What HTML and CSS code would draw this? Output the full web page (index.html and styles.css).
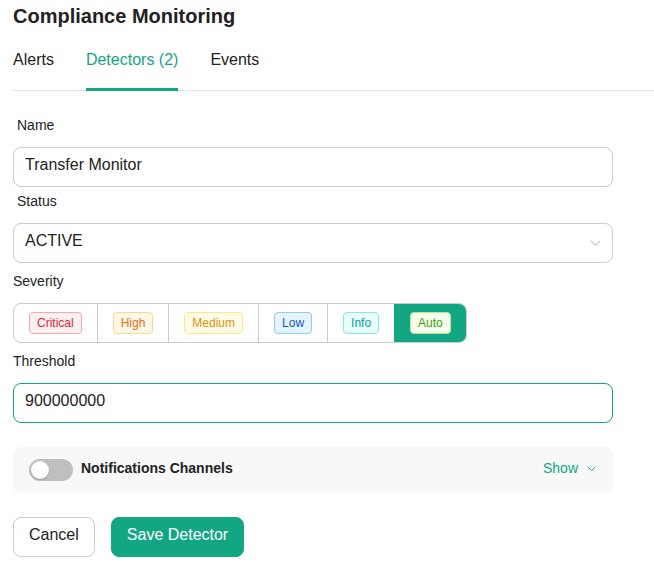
FILE: index.html
```html
<!DOCTYPE html>
<html>
<head>
<meta charset="utf-8">
<link rel="stylesheet" href="styles.css">
</head>
<body>
<div class="page">
  <h1 class="title">Compliance Monitoring</h1>
  <nav class="tabs">
    <span class="tab">Alerts</span>
    <span class="tab active">Detectors (2)</span>
    <span class="tab">Events</span>
  </nav>

  <form class="form">
    <label class="label indent">Name</label>
    <div class="field">Transfer Monitor</div>

    <label class="label indent">Status</label>
    <div class="field select">
      <span>ACTIVE</span>
      <svg class="chev" width="11" height="7" viewBox="0 0 11 7"><path d="M1 1 L5.5 5.5 L10 1" fill="none" stroke="#c4c6cc" stroke-width="1.1"/></svg>
    </div>

    <label class="label">Severity</label>
    <div class="segmented">
      <div class="seg"><span class="badge critical">Critical</span></div>
      <div class="seg"><span class="badge high">High</span></div>
      <div class="seg"><span class="badge medium">Medium</span></div>
      <div class="seg"><span class="badge low">Low</span></div>
      <div class="seg"><span class="badge info">Info</span></div>
      <div class="seg selected"><span class="badge auto">Auto</span></div>
    </div>

    <label class="label">Threshold</label>
    <div class="field focus">900000000</div>

    <div class="panel">
      <span class="toggle"><span class="knob"></span></span>
      <span class="panel-title">Notifications Channels</span>
      <span class="show">Show
        <svg width="9" height="6" viewBox="0 0 9 6"><path d="M0.8 1 L4.5 4.6 L8.2 1" fill="none" stroke="#13a683" stroke-width="1"/></svg>
      </span>
    </div>

    <div class="actions">
      <span class="btn">Cancel</span>
      <span class="btn primary">Save Detector</span>
    </div>
  </form>
</div>
</body>
</html>
```
FILE: styles.css
```css
* { box-sizing: border-box; }
body {
  margin: 0;
  font-family: "Liberation Sans", Arial, sans-serif;
  color: #222;
  background: #fff;
}
.page {
  padding: 4px 0 0 13px;
}
.title {
  margin: 0;
  font-size: 20px;
  font-weight: bold;
  line-height: 24px;
  color: #222;
}
.tabs {
  display: flex;
  gap: 32px;
  margin-top: 22px;
  border-bottom: 1px solid #e3e3e8;
}
.tab {
  font-size: 16px;
  line-height: 19px;
  padding-bottom: 19px;
  color: #222;
  border-bottom: 3px solid transparent;
  margin-bottom: -1px;
}
.tab.active {
  color: #13a683;
  border-bottom-color: #13a683;
}
.form {
  width: 600px;
  display: flex;
  flex-direction: column;
  padding-top: 26px;
}
.label {
  font-size: 14px;
  line-height: 16px;
  color: #222;
  margin-bottom: 14px;
}
.label.indent { padding-left: 4px; }
.field {
  height: 40px;
  border: 1px solid #c9ccd6;
  border-radius: 8px;
  padding: 0 11px 4px;
  display: flex;
  align-items: center;
  font-size: 16px;
  color: #222;
  margin-bottom: 6px;
}
.field.select {
  justify-content: space-between;
  margin-bottom: 10px;
}
.field.select .chev { margin-top: 4px; }
.field.focus {
  border-color: #13a683;
  margin-bottom: 24px;
}
.segmented {
  display: flex;
  align-self: flex-start;
  height: 40px;
  border: 1px solid #c9ccd6;
  border-radius: 8px;
  margin-bottom: 10px;
  overflow: hidden;
}
.seg {
  display: flex;
  align-items: center;
  padding: 0 15px;
  border-left: 1px solid #c9ccd6;
}
.seg:first-child { border-left: none; }
.seg.selected {
  background: #13a683;
  border-left-color: #13a683;
}
.badge {
  font-size: 12px;
  line-height: 20px;
  padding: 0 7px;
  border: 1px solid;
  border-radius: 4px;
}
.critical { color: #d9263b; background: #fff0f0; border-color: #f7a8ac; }
.high { color: #e0721b; background: #fff7e6; border-color: #ffd591; }
.medium { color: #d8940f; background: #fffbe6; border-color: #ffe58f; }
.low { color: #0b54d2; background: #e6f4ff; border-color: #91caff; }
.info { color: #0d9b9e; background: #e6fffb; border-color: #87e8de; }
.auto { color: #3a9e10; background: #f6ffed; border-color: #b7eb8f; }

.panel {
  height: 46px;
  background: #f8f8f8;
  border-radius: 8px;
  display: flex;
  align-items: center;
  padding: 0 16px 4px;
  margin-bottom: 24px;
}
.toggle {
  width: 44px;
  height: 22px;
  border-radius: 11px;
  background: #bfbfbf;
  position: relative;
  flex: none;
  margin-top: 4px;
}
.knob {
  position: absolute;
  left: 2px;
  top: 2px;
  width: 18px;
  height: 18px;
  border-radius: 50%;
  background: #fff;
  box-shadow: 0 1px 2px rgba(0,0,0,0.2);
}
.panel-title {
  margin-left: 8px;
  font-size: 14px;
  font-weight: bold;
  color: #222;
}
.show {
  margin-left: auto;
  color: #13a683;
  font-size: 14px;
  display: flex;
  align-items: center;
  gap: 9px;
  margin-right: 1px;
}
.show svg { margin-top: 2px; }
.actions {
  display: flex;
  gap: 16px;
}
.btn {
  height: 40px;
  display: flex;
  align-items: center;
  padding: 0 15px 4px;
  border: 1px solid #c9ccd6;
  border-radius: 8px;
  font-size: 16px;
  color: #222;
}
.btn.primary {
  background: #13a683;
  border-color: #13a683;
  color: #fff;
}
```
